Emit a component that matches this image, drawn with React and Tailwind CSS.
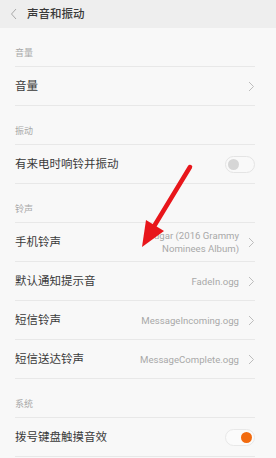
const font = { fontFamily: '"Noto Sans CJK SC", "Noto Sans", sans-serif' }
const latin = { fontFamily: 'Roboto, "Liberation Sans", sans-serif' }

function Chevron() {
  return (
    <svg width="7" height="11" viewBox="0 0 7 11" className="shrink-0">
      <path d="M1 1 L5.5 5.5 L1 10" fill="none" stroke="#bdbdbd" strokeWidth="1" />
    </svg>
  )
}

function Label({ children }) {
  return (
    <div className="ml-[15px] mr-[21px] h-[39px] border-b border-[#e8e8e8] flex items-end pb-[7px]">
      <span className="text-[9px] leading-[12px] text-[#a8a8a8]">{children}</span>
    </div>
  )
}

function Row({ title, value, toggle, two }) {
  return (
    <div className="ml-[15px] mr-[21px] h-[39px] border-b border-[#e8e8e8] flex items-center">
      <span className="text-[11.5px] text-[#3a3a3a] flex-1 whitespace-nowrap">{title}</span>
      {value && (
        <span className="text-[9.6px] leading-[13px] text-[#a8a8a8] text-right mr-[9px]" style={latin}>
          {value}
        </span>
      )}
      {two && (
        <span className="text-[9.6px] leading-[13px] text-[#a8a8a8] text-right mr-[9px]" style={latin}>
          Sugar (2016 Grammy
          <br />
          Nominees Album)
        </span>
      )}
      {toggle === undefined && <Chevron />}
      {toggle === false && (
        <div className="w-[30px] h-[17px] rounded-full border border-[#e4e4e4] bg-[#f9f9f9] flex items-center px-[2px]">
          <div className="w-[11px] h-[11px] rounded-full bg-[#d6d6d6]" />
        </div>
      )}
      {toggle === true && (
        <div className="w-[30px] h-[17px] rounded-full border border-[#e8e8e8] bg-[#fbfbfb] flex items-center justify-end px-[2px]">
          <div className="w-[11px] h-[11px] rounded-full bg-[#f26b0f]" />
        </div>
      )}
    </div>
  )
}

export default function App() {
  return (
    <div className="relative w-[276px] h-[458px] overflow-hidden bg-[#f8f8f8]" style={font}>
      <div className="h-[28px] bg-[#eeeeee] flex items-center">
        <svg width="8" height="12" viewBox="0 0 8 12" className="ml-[10px]">
          <path d="M6 1 L1.5 6 L6 11" fill="none" stroke="#a8a8a8" strokeWidth="1" />
        </svg>
        <span className="ml-[9px] text-[11.5px] font-medium text-[#3a3a3a]">声音和振动</span>
      </div>
      <Label>音量</Label>
      <Row title="音量" />
      <Label>振动</Label>
      <Row title="有来电时响铃并振动" toggle={false} />
      <Label>铃声</Label>
      <Row title="手机铃声" two />
      <Row title="默认通知提示音" value="FadeIn.ogg" />
      <Row title="短信铃声" value="MessageIncoming.ogg" />
      <Row title="短信送达铃声" value="MessageComplete.ogg" />
      <Label>系统</Label>
      <Row title="拨号键盘触摸音效" toggle={true} />
      <svg className="absolute left-0 top-0" width="276" height="458" viewBox="0 0 276 458">
        <line x1="190" y1="167" x2="153" y2="228" stroke="#e8161b" strokeWidth="4.5" strokeLinecap="round" />
        <polygon points="142,247 146,220 164,231" fill="#e8161b" />
      </svg>
    </div>
  )
}
